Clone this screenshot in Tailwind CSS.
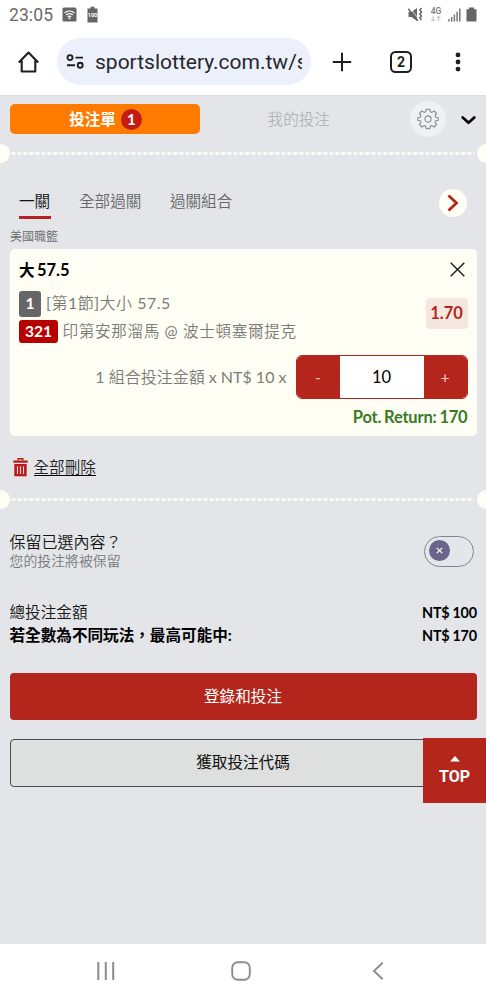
<!DOCTYPE html>
<html lang="zh-Hant">
<head>
<meta charset="utf-8">
<meta name="viewport" content="width=device-width, initial-scale=1">
<title>投注單</title>
<script src="https://cdn.jsdelivr.net/npm/@tailwindcss/browser@4"></script>
</head>
<body class="w-[486px] h-[1000px] overflow-hidden bg-white flex flex-col font-[Lato,'Noto_Sans_CJK_TC',sans-serif] text-[15.6px] text-black">

<!-- Status bar -->
<div class="h-7 shrink-0 flex items-center pl-[9px] pr-[9px] pt-[1px] font-[Roboto,sans-serif] text-[#6b6b6b]">
  <span class="w-[53px] text-[17.5px] leading-7 tracking-[0.1px] whitespace-nowrap">23:05</span>
  <svg class="w-[15px] h-[15px]" viewBox="0 0 15 15"><rect x=".5" y=".5" width="14" height="14" rx="1.5" fill="#666"/><path d="M2.6 6a7 7 0 0 1 9.8 0M4.2 8a4.6 4.6 0 0 1 6.6 0M5.8 9.8a2.4 2.4 0 0 1 3.4 0" fill="none" stroke="#fff" stroke-width="1.1"/><circle cx="7.5" cy="11.3" r="1" fill="#fff"/></svg>
  <svg class="w-[11px] h-[17px] ml-[9.5px]" viewBox="0 0 11 17"><path d="M.5 2.5h3V.7h4v1.8h3v14H.5z" fill="#666"/><text x="5.5" y="11.2" font-size="5.5" font-weight="700" text-anchor="middle" fill="#fff">100</text></svg>
  <svg class="w-[15px] h-[15px] ml-auto" viewBox="0 0 15 15"><path d="M.5 5h3L9 1v13L3.5 10h-3z" fill="#666"/><path d="M1.5.5l10 12.5" stroke="#fff" stroke-width=".7"/><path d="M.2 1.8l9.8 12" stroke="#666" stroke-width="1.4"/><path d="M13.5 1l-1.7 2 1.7 2-1.7 2 1.7 2-1.7 2 1.7 2" fill="none" stroke="#666" stroke-width="1.5"/></svg>
  <svg class="w-[12px] h-[17px] ml-[7.5px]" viewBox="0 0 12 17"><text x="6" y="8" font-size="8.5" font-weight="500" text-anchor="middle" fill="#777">4G</text><path d="M3.2 10v5M1.2 13l2 2 2-2M8.6 15.3v-5M6.6 12.3l2-2 2 2" fill="none" stroke="#bbb" stroke-width="1"/></svg>
  <svg class="w-[13px] h-[14px] ml-[5.5px]" viewBox="0 0 13 14"><path d="M1 11v2.5M3.7 9v4.5M6.4 6.5v7M9.1 3.8v9.7M11.8.5v13" stroke="#777" stroke-width="1.5"/></svg>
  <svg class="w-[11px] h-[15px] ml-[5.5px]" viewBox="0 0 11 15"><path d="M.5 2.2h2.5V.5h5v1.7h2.5v12.3H.5z" fill="#666"/></svg>
</div>

<!-- Browser toolbar -->
<div class="h-[67px] shrink-0 flex items-center pl-[18px] pr-[24px] font-[Roboto,sans-serif]">
  <svg class="w-[21px] h-[22px] shrink-0" viewBox="0 0 21 22"><path d="M.8 11.5L10.5 1.6l9.7 9.9M3.7 9.5v11h13.6v-11" fill="none" stroke="#1f1f1f" stroke-width="2.1" stroke-linejoin="round"/></svg>
  <div class="ml-[18px] w-[254px] h-[47px] rounded-full bg-[#ecf0fa] flex items-center shrink-0 pl-[9px]">
    <svg class="w-[18px] h-[15px] shrink-0" viewBox="0 0 18 15" fill="none" stroke="#1f1f1f" stroke-width="1.9"><circle cx="4" cy="3.6" r="2.5"/><path d="M9.5 3.6H17M1 11.2h8"/><circle cx="14.2" cy="11.2" r="2.5"/></svg>
    <span class="ml-[11px] w-[207px] overflow-hidden whitespace-nowrap text-[21px] leading-8 text-[#26272b]">sportslottery.com.tw/s</span>
  </div>
  <svg class="w-[20px] h-[20px] ml-[21px]" viewBox="0 0 20 20"><path d="M10 .8v18.4M.8 10h18.4" stroke="#1f1f1f" stroke-width="2"/></svg>
  <div class="ml-[38px] w-[22px] h-[22px] rounded-[5.5px] border-2 border-[#1f1f1f] flex items-center justify-center text-[14px] leading-none font-bold text-[#1f1f1f]">2</div>
  <svg class="w-[6px] h-[20px] ml-auto mr-[1.5px]" viewBox="0 0 6 20" fill="#1f1f1f"><circle cx="3" cy="2.9" r="2.4"/><circle cx="3" cy="10" r="2.4"/><circle cx="3" cy="17.1" r="2.4"/></svg>
</div>

<!-- Bet slip -->
<main class="relative h-[849px] shrink-0 bg-[#e3e5e8] border-t border-[#dcdde0] flex flex-col">
  <div class="h-[48px] shrink-0 flex items-center pl-[9.5px] pr-[10px] pb-[2px]">
    <div class="w-[190.5px] h-[30.5px] rounded-[5px] bg-[#ff7a00] flex items-center justify-center text-white font-bold pl-[1.5px]">
      <span class="leading-5 text-[15.5px]">投注單</span>
      <span class="ml-[5px] w-[21px] h-[21px] rounded-full bg-[#c41c14] flex items-center justify-center text-[15px] leading-none">1</span>
    </div>
    <div class="w-[197.5px] text-center text-[#b3b5b8] leading-5 font-[Lato,'Noto_Sans_CJK_TC_DemiLight','Noto_Sans_CJK_TC',sans-serif]">我的投注</div>
    <div class="w-9 h-9 ml-[12.5px] rounded-full bg-[#f0f1f4] flex items-center justify-center shrink-0">
      <svg class="w-[22px] h-[22px]" viewBox="0 0 22 22" fill="none" stroke="#85878b" stroke-width="1.1" stroke-linejoin="round"><path d="M9.3 1.2h3.4l.6 2.5 1.6.7 2.2-1.4 2.4 2.4-1.4 2.2.7 1.6 2.4.6v2.4l-2.4.6-.7 1.6 1.4 2.2-2.4 2.4-2.2-1.4-1.6.7-.6 2.5H9.3l-.6-2.5-1.6-.7L4.9 19l-2.4-2.4 1.4-2.2-.7-1.6-2.4-.6V9.8l2.4-.6.7-1.6L2.5 5.4 4.9 3l2.2 1.4 1.6-.7z"/><circle cx="11" cy="11" r="3.1"/></svg>
    </div>
    <svg class="w-[15px] h-[9px] ml-[14.5px] mt-[3px]" viewBox="0 0 15 9"><path d="M1.7 1.5l5.8 5.3 5.8-5.3" fill="none" stroke="#000" stroke-width="2.6" stroke-linecap="round" stroke-linejoin="round"/></svg>
  </div>

  <div class="h-[19px] shrink-0 flex items-center justify-between overflow-hidden">
    <span class="w-[19px] h-[19px] -ml-[9.5px] rounded-full bg-[#fffef5]"></span>
    <svg class="w-[464px] h-[3px]" viewBox="0 0 464 3"><path d="M.5 1.500h463" stroke="#fffef8" stroke-width="2.400" stroke-dasharray="4 2"/></svg>
    <span class="w-[19px] h-[19px] -mr-[9.5px] rounded-full bg-[#fffef5]"></span>
  </div>

  <nav class="h-[62px] shrink-0 flex pt-[26px] pl-[19px] pr-[19px] text-[#66686b] font-[Lato,'Noto_Sans_CJK_TC_DemiLight','Noto_Sans_CJK_TC',sans-serif]">
    <span class="h-[30px] w-[31.5px] pt-[1px] leading-[22px] text-[#111] border-b-[3.5px] border-[#b4231d] whitespace-nowrap">一關</span>
    <span class="leading-[22px] pt-[1px] ml-[28.5px]">全部過關</span>
    <span class="leading-[22px] pt-[1px] ml-[28.5px]">過關組合</span>
    <span class="ml-auto w-7 h-7 rounded-full bg-[#fffef5] flex items-center justify-center"><svg class="w-[12px] h-[18px]" viewBox="0 0 12 18"><path d="M1.5 1.5L9.5 9l-8 7.5" fill="none" stroke="#b4261c" stroke-width="2.8"/></svg></span>
  </nav>

  <div class="h-[24px] shrink-0 pl-[10px] text-[12px] leading-[24px] text-[#696b6e] font-[Lato,'Noto_Sans_CJK_TC_DemiLight','Noto_Sans_CJK_TC',sans-serif]">美國職籃</div>

  <section class="mx-[9.5px] h-[187px] shrink-0 rounded-[5px] bg-[#fffef5] pl-[9.5px] pr-[9px] pt-[9px] flex flex-col">
    <div class="h-[23px] flex items-center justify-between">
      <span class="font-bold leading-[22px] [word-spacing:-1.5px]">大 <span class="text-[16.5px]">57.5</span></span>
      <svg class="w-[15px] h-[15px] mr-[2.5px]" viewBox="0 0 15 15"><path d="M.7.7l13.6 13.6M14.3.7L.7 14.3" stroke="#1a1a1a" stroke-width="1.4"/></svg>
    </div>
    <div class="mt-[10px] flex justify-between text-[#7c7c76] font-[Lato,'Noto_Sans_CJK_TC_DemiLight','Noto_Sans_CJK_TC',sans-serif]">
      <div>
        <div class="flex items-center h-[26px]">
          <span class="w-[22px] h-[26px] rounded-[3px] bg-[#666] text-white font-bold flex items-center justify-center">1</span>
          <span class="ml-[5px] mt-[-3px] leading-[22px] text-[16px] tracking-[0.5px]">[第1節]大小 57.5</span>
        </div>
        <div class="flex items-center h-[23px] mt-[3px]">
          <span class="w-[39px] h-[23px] rounded-[3px] bg-[#b80000] text-white font-bold flex items-center justify-center">321</span>
          <span class="ml-[4.5px] mt-[-2px] leading-[22px] tracking-[0.65px] whitespace-nowrap">印第安那溜馬 @ 波士頓塞爾提克</span>
        </div>
      </div>
      <span class="mt-[6.5px] w-[42px] h-[31px] rounded-[4px] bg-[#f6e6e0] text-[#b4261c] font-bold text-[16.5px] flex items-center justify-center">1.70</span>
    </div>
    <div class="mt-[12px] flex items-center justify-end">
      <span class="mr-[9px] text-[#7c7c76] text-[16px] whitespace-nowrap font-[Lato,'Noto_Sans_CJK_TC_DemiLight','Noto_Sans_CJK_TC',sans-serif]">1 組合投注金額 x NT$ 10 x</span>
      <div class="w-[172px] h-[44px] rounded-[6px] overflow-hidden border border-[#b4261c] flex text-center leading-[42px] text-[#f3c9c2]">
        <span class="w-[43px] bg-[#b4261c]">-</span>
        <span class="flex-1 bg-white text-black text-[16.5px]">10</span>
        <span class="w-[43px] bg-[#b4261c]">+</span>
      </div>
    </div>
    <div class="mt-[7px] text-right text-[16.5px] leading-[22px] font-bold tracking-[-0.2px] [word-spacing:-1px] text-[#387a24]">Pot. Return: 170</div>
  </section>

  <div class="h-[54px] shrink-0 flex pt-[20px] pl-[12.5px]">
    <svg class="w-[15px] h-[19px] mt-[2px]" viewBox="0 0 15 19"><path d="M5.2 2.5V.8h4.6v1.7" fill="none" stroke="#bd1919" stroke-width="1.4"/><path d="M.3 2.6h14.4v2.2H.3zM1.3 6h12.4v12.200H1.3z" fill="#bd1919"/><path d="M4.5 8.2v7.8M7.5 8.2v7.8M10.5 8.2v7.8" stroke="#f3d9d9" stroke-width="1.1"/></svg>
    <span class="ml-[6px] h-[20px] leading-[22px] border-b border-black text-[#222] font-[Lato,'Noto_Sans_CJK_TC_DemiLight','Noto_Sans_CJK_TC',sans-serif]">全部刪除</span>
  </div>

  <div class="h-[19px] shrink-0 flex items-center justify-between overflow-hidden">
    <span class="w-[19px] h-[19px] -ml-[9.5px] rounded-full bg-[#fffef5]"></span>
    <svg class="w-[464px] h-[3px]" viewBox="0 0 464 3"><path d="M.5 1.500h463" stroke="#fffef8" stroke-width="2.400" stroke-dasharray="4 2"/></svg>
    <span class="w-[19px] h-[19px] -mr-[9.5px] rounded-full bg-[#fffef5]"></span>
  </div>

  <div class="h-[92px] shrink-0 flex justify-between pl-[9.5px] pr-[12px] pt-[22px] font-[Lato,'Noto_Sans_CJK_TC_DemiLight','Noto_Sans_CJK_TC',sans-serif]">
    <div>
      <div class="text-[16px] leading-[22px] text-[#161616]">保留已選內容？</div>
      <div class="text-[13.9px] leading-[16px] text-[#77797c]">您的投注將被保留</div>
    </div>
    <span class="mt-[5px] w-[50px] h-[31px] rounded-full border border-[#85868c] bg-[#e4e6ec] p-[3.5px]"><span class="w-[21px] h-[21px] rounded-full bg-[#68668a] flex items-center justify-center mt-[-1px]"><svg class="w-[7px] h-[7px]" viewBox="0 0 7 7"><path d="M.8.8l5.4 5.4M6.200.8L.8 6.200" stroke="#fff" stroke-width="1.2"/></svg></span></span>
  </div>

  <div class="shrink-0 pl-[9.5px] pr-[9px] h-[71px]">
    <div class="flex justify-between leading-[23px]"><span class="text-[#161616] font-[Lato,'Noto_Sans_CJK_TC_DemiLight','Noto_Sans_CJK_TC',sans-serif]">總投注金額</span><span class="font-bold text-[14.4px] tracking-[-0.15px] [word-spacing:-0.5px]">NT$ 100</span></div>
    <div class="flex justify-between leading-[23px]"><span class="font-bold">若全數為不同玩法，最高可能中:</span><span class="font-bold text-[14.4px] tracking-[-0.15px] [word-spacing:-0.5px]">NT$ 170</span></div>
  </div>

  <div class="mx-[9.5px] mt-[1px] h-[47px] shrink-0 rounded-[4px] bg-[#b4261c] text-white flex items-center justify-center">登錄和投注</div>
  <div class="mx-[9.5px] mt-[19px] h-[48px] shrink-0 rounded-[4px] bg-[#dedfdf] border border-[#4a4b4d] text-[#111] flex items-center justify-center">獲取投注代碼</div>

  <!-- Floating back-to-top button -->
  <div class="absolute right-0 top-[642px] w-[63px] h-[65px] bg-[#b4261c] text-white flex flex-col items-center pt-[18px] font-[Roboto,sans-serif]">
    <svg class="w-[10px] h-[6px]" viewBox="0 0 10 6"><path d="M5 0l5 5.6H0z" fill="#fff"/></svg>
    <span class="text-[16px] leading-[20px] mt-[5px] font-bold">TOP</span>
  </div>
</main>

<!-- System navigation -->
<footer class="h-[56px] shrink-0 flex items-center pl-[97px] pb-[3px]">
  <svg class="w-[18px] h-[18px]" viewBox="0 0 18 18"><path d="M1.3 0v18M8.8 0v18M16.2 0v18" stroke="#8c8c8c" stroke-width="2"/></svg>
  <svg class="w-[20px] h-[20px] ml-[116px]" viewBox="0 0 20 20"><rect x="1.2" y="1.2" width="17.6" height="17.6" rx="5.5" fill="none" stroke="#8c8c8c" stroke-width="1.9"/></svg>
  <svg class="w-[12px] h-[18px] ml-[120.5px]" viewBox="0 0 12 18"><path d="M10.7.8L2 9l8.7 8.2" fill="none" stroke="#8c8c8c" stroke-width="1.9"/></svg>
</footer>
</body>
</html>
